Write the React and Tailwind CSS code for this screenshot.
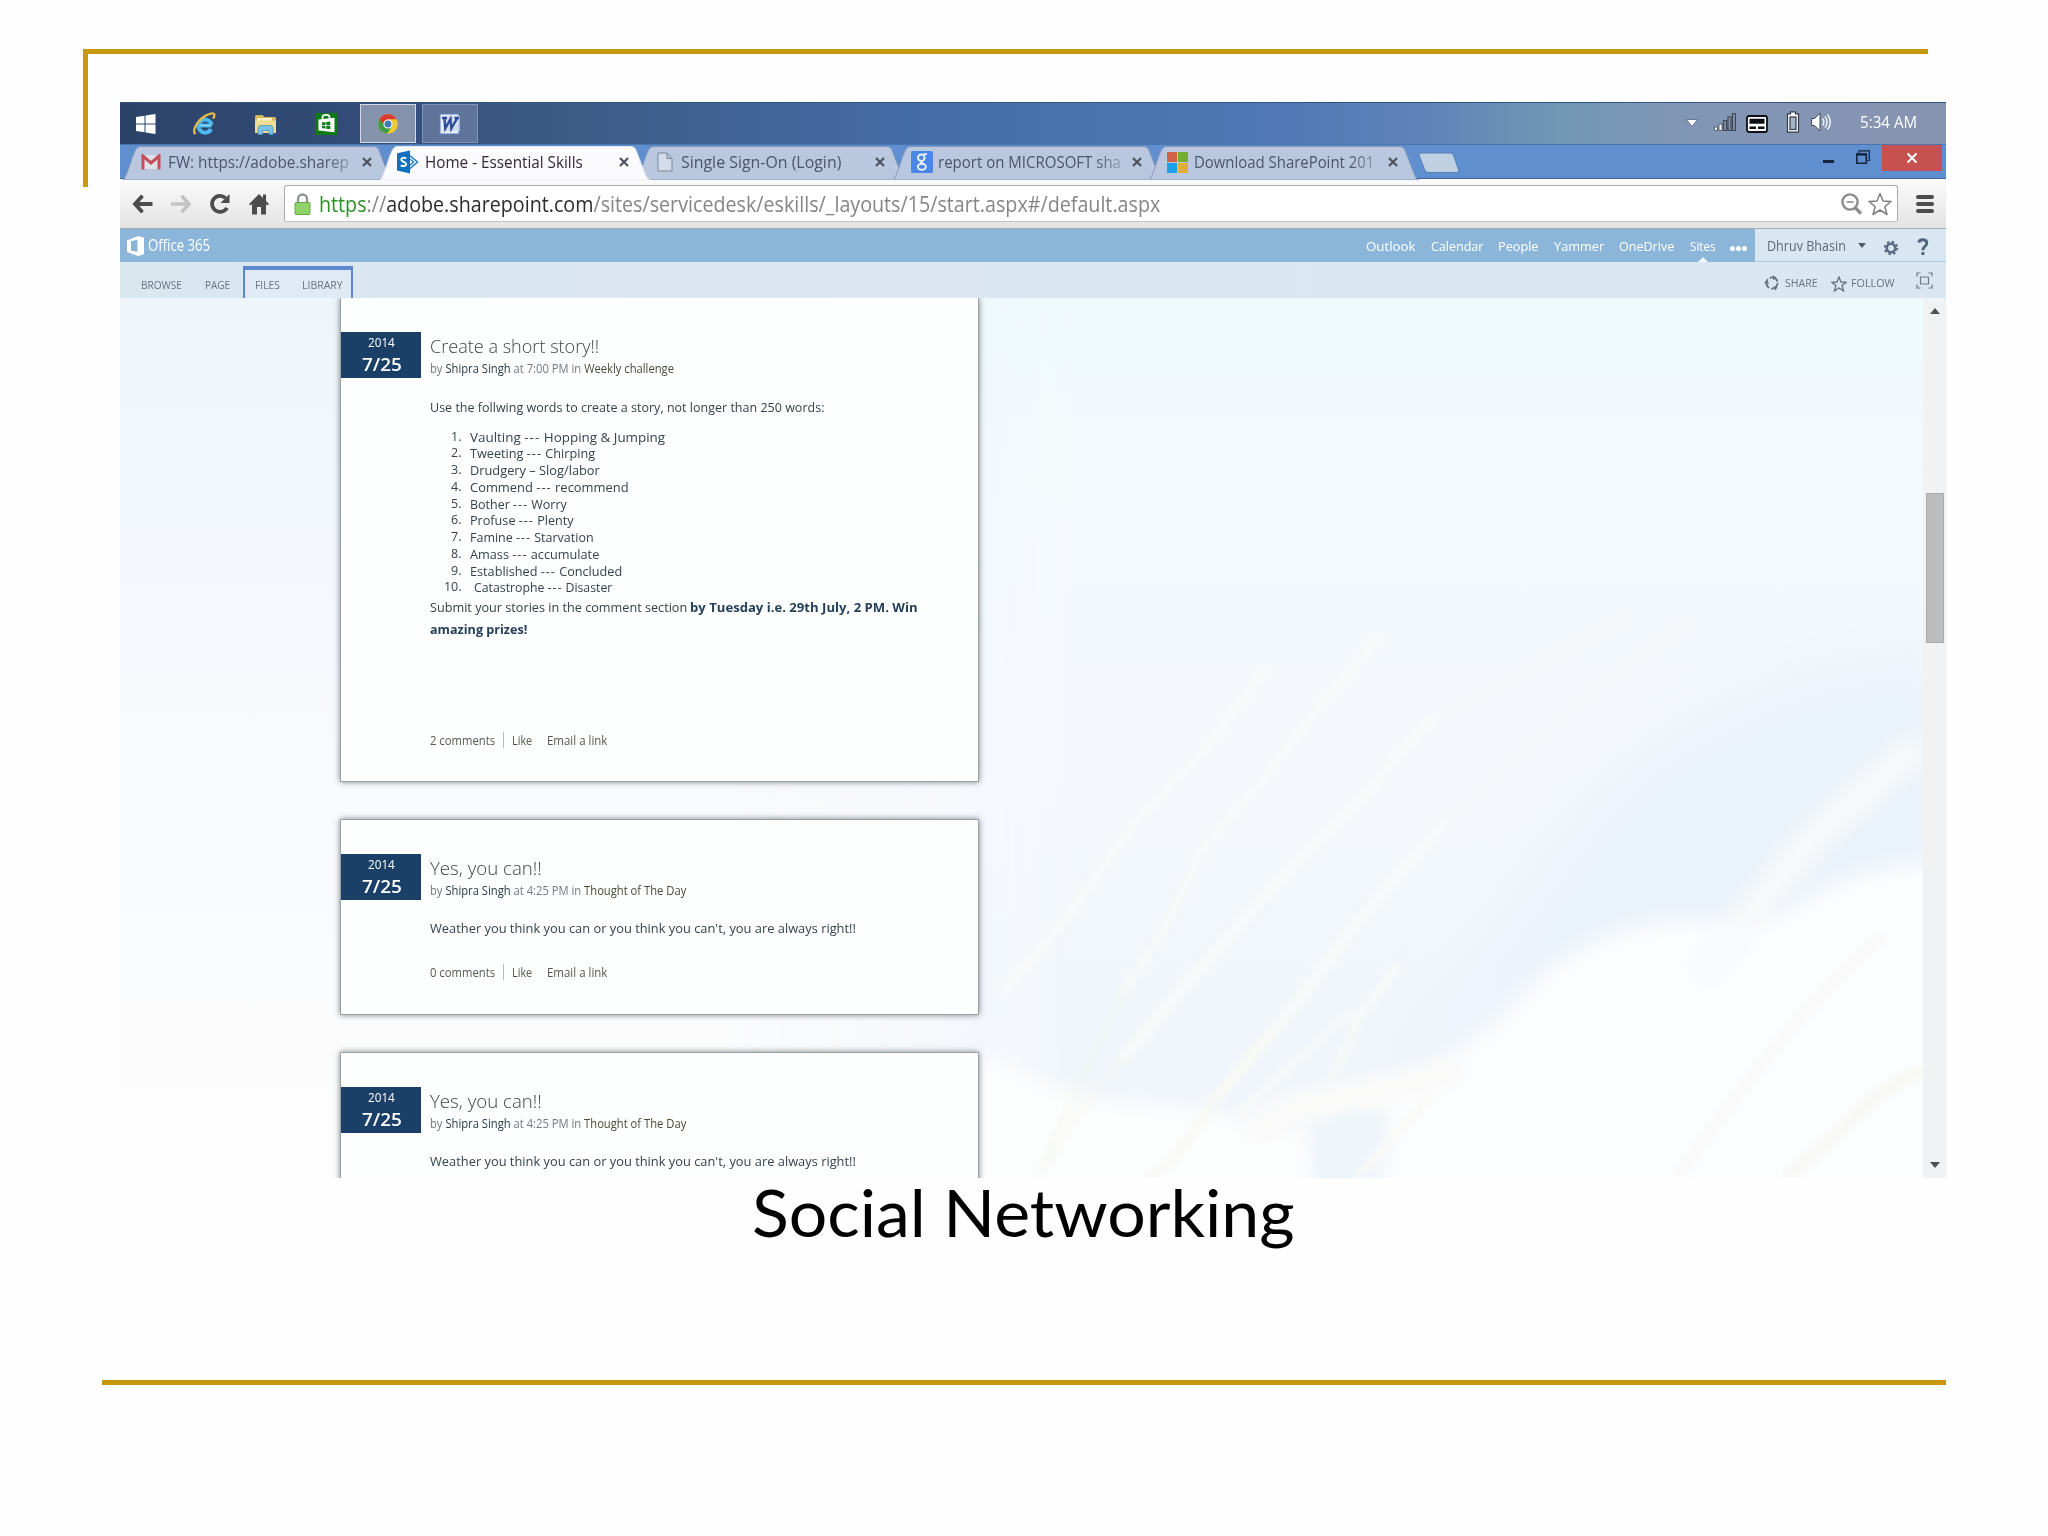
import React, { useLayoutEffect, useRef, useState } from 'react';

// Squeezes or stretches a line of text to the given width
const Fit = ({ w, className = '', children }) => {
  const ref = useRef(null);
  const [scale, setScale] = useState(1);

  useLayoutEffect(() => {
    setScale(w / ref.current.offsetWidth);
  }, [w]);

  return (
    <span className={`inline-block shrink-0 whitespace-nowrap ${className}`} style={{ width: w }}>
      <span ref={ref} className="inline-block origin-left" style={{ transform: `scaleX(${scale})` }}>
        {children}
      </span>
    </span>
  );
};

const WindowsIcon = () => (
  <svg viewBox="0 0 20 20" className="w-5 h-5 shrink-0" fill="#fff">
    <path d="M0 3l8.500-1.200v7.700H0zM9.500 1.600L19.500 0v9.500h-10zM0 10.500h8.500v7.700L0 17zM9.500 10.500h10V20l-10-1.600z" />
  </svg>
);

const ExplorerIcon = () => (
  <svg viewBox="0 0 24 24" className="w-6 h-6 shrink-0" fill="none">
    <path d="M19.500 13.500H7.200M19 17A6.600 6.600 0 1 1 19.600 13" stroke="#4cb8ee" strokeWidth="4" />
    <path d="M7.600 13.400h12" stroke="#9fe0fb" strokeWidth="1" />
    <path d="M3.500 22.200C-.5 19 5 9 13 4c4-2.400 8.500-3.600 9.300-1.800.4 1-.2 2.800-1.200 4.600" stroke="#e5bb45" strokeWidth="2.300" />
  </svg>
);

const FolderIcon = () => (
  <svg viewBox="0 0 24 24" className="w-6 h-6 shrink-0">
    <path d="M2 4.500a1.500 1.500 0 0 1 1.500-1.500h6l2 2h10A1.500 1.500 0 0 1 23 6.500V21H2z" fill="#d9b95f" />
    <path d="M4 6h15v4H4z" fill="#f4eec2" />
    <path d="M2 8.500h21V21H2z" fill="#f0dc92" />
    <path d="M5 22.500v-6a3 3 0 0 1 3-3h9a3 3 0 0 1 3 3v6h-4v-4H9.500v4z" fill="#7cc3e6" stroke="#4a94bd" strokeWidth=".8" />
  </svg>
);

const StoreIcon = () => (
  <svg viewBox="0 0 24 24" className="w-6 h-6 shrink-0">
    <path d="M1 1h21v22H1z" fill="#0f7a17" />
    <path d="M3.500 7.500L19.500 5.800v14.500L3.500 18.500z" fill="#fff" />
    <path d="M7.500 7V5c0-2.800 7-3.100 7 0v1.500" fill="none" stroke="#fff" strokeWidth="1.800" />
    <path d="M7 10.400l3.500-.4v3H7zM11.300 9.900l4-.5v3.600h-4zM7 13.700h3.500v2.900L7 16.200zM11.300 13.700h4v3.500l-4-.5z" fill="#0f7a17" />
  </svg>
);

const ChromeIcon = () => (
  <svg viewBox="0 0 20 20" className="w-5 h-5 shrink-0">
    <circle cx="10" cy="10" r="9.800" fill="#f2c832" />
    <path d="M10 10L1.500 5A9.800 9.800 0 0 0 9 19.700L13.500 13z" fill="#3f9d45" />
    <path d="M1.500 5A9.800 9.800 0 0 1 18.600 5.300H10L6 11z" fill="#d93a2c" />
    <circle cx="10" cy="10" r="4.600" fill="#fff" />
    <circle cx="10" cy="10" r="3.500" fill="#3d79b8" />
  </svg>
);

const WordIcon = () => (
  <svg viewBox="0 0 22 22" className="w-[22px] h-[22px] shrink-0">
    <path d="M1 1h19v20H1z" fill="#e8eefa" stroke="#5b7cbf" />
    <path d="M4 3h17v15H4z" fill="#c9d6f0" opacity=".7" />
    <path d="M3 5h5M5.500 5.500l.8 10L11.500 6l.8 9.500L18 5.500M15.500 5H20" fill="none" stroke="#2f4c98" strokeWidth="2.400" />
  </svg>
);

const Taskbar = () => (
  <div className="h-[42px] shrink-0 flex items-center border-t border-[#33527c] pl-[16px] bg-[linear-gradient(90deg,#2c4368_0%,#334d79_14%,#3d5a85_24%,#446ba3_42%,#4674ab_52%,#5079b5_64%,#6085b9_72%,#7198b4_79%,#8096b5_85%,#8794b1_100%)]">
    <WindowsIcon />
    <span className="w-9" />
    <ExplorerIcon />
    <span className="w-[37px]" />
    <FolderIcon />
    <span className="w-[38px]" />
    <StoreIcon />
    <div className="ml-[21px] w-[56px] h-[39px] shrink-0 flex items-center justify-center border border-[#d5dbe4] bg-[#8492ab]">
      <ChromeIcon />
    </div>
    <div className="ml-[6px] w-[56px] h-[39px] shrink-0 flex items-center justify-center border border-[#8294b4] bg-[#5f7499]">
      <WordIcon />
    </div>
    <div className="ml-auto mr-[29.500px] mb-[4px] flex items-center">
      <svg viewBox="0 0 12 8" className="w-3 h-2 mt-[2px] mr-[16px]">
        <path d="M.5.5h11L6 7.500z" fill="#fff" stroke="#4f5f7d" strokeWidth=".8" />
      </svg>
      <svg viewBox="0 0 22 18" className="w-[22px] h-[18px] mr-[10px]">
        <path d="M.5 14h3v3.500h-3zM5 11h3v6.500H5z" fill="#fff" stroke="#3c4658" strokeWidth=".8" />
        <path d="M9.500 7.500h3v10h-3zM14 4h3v13.500h-3zM18.500.5h3v17h-3z" fill="#8a95aa" stroke="#3c4658" strokeWidth="1.200" />
      </svg>
      <svg viewBox="0 0 22 18" className="w-[22px] h-[18px] mt-1 mr-[18px]">
        <rect x="1" y="1" width="20" height="16" rx="2" fill="#fff" stroke="#0c0f14" strokeWidth="1.800" />
        <path d="M3.500 3.800h15v5h-15zM3.500 11.500h6.500v2.500H3.500zM12 11.500h6.500v2.500H12z" fill="#0c0f14" />
      </svg>
      <svg viewBox="0 0 14 22" className="w-[14px] h-[22px] mr-[11px]">
        <path d="M4.500.8h5v2h3v18.400h-11V2.800h3z" fill="#fff" stroke="#303a4b" strokeWidth="1.200" />
        <rect x="4" y="6" width="6" height="12.500" fill="#a8b4c8" stroke="#303a4b" strokeWidth="1.200" />
      </svg>
      <svg viewBox="0 0 20 20" className="w-5 h-5 mr-[29px]">
        <path d="M.6 6.500h3L9 1v18l-5.400-5.500h-3z" fill="#fff" stroke="#3c4658" />
        <path d="M11.500 6.500c1.600 2 1.600 5 0 7M14 4.500c2.700 3.200 2.700 7.800 0 11M16.500 2.500c3.700 4.500 3.700 10.500 0 15" fill="none" stroke="#eef2f8" strokeWidth="1.500" />
      </svg>
      <Fit w={57} className="text-[17px] leading-6 text-white">5:34 AM</Fit>
    </div>
  </div>
);

const GmailIcon = () => (
  <svg viewBox="0 0 20 16" className="w-5 h-4">
    <path d="M1 1h18v14H1z" fill="#dfe0ea" />
    <path d="M2 15.500V2l8 7 8-7v13.500" fill="none" stroke="#c1505a" strokeWidth="3" />
  </svg>
);

const SharePointIcon = () => (
  <svg viewBox="0 0 22 24" className="w-[22px] h-6 -ml-px">
    <path d="M12 5l8.500 7-8.500 7.500" fill="none" stroke="#2b7fc4" strokeWidth="1.600" />
    <path d="M13 9l3.500 3-3.500 3.500" fill="none" stroke="#2b7fc4" strokeWidth="1.400" />
    <path d="M0 3.200L13 .5v23L0 20.600z" fill="#1170bf" />
    <path d="M9.300 8.300C6.500 6.900 4 8 4.300 9.900c.3 2.200 4.900 1.900 4.900 4.200 0 2-2.900 2.700-5.400 1.300" fill="none" stroke="#fff" strokeWidth="1.900" />
  </svg>
);

const PageIcon = () => (
  <svg viewBox="0 0 16 20" className="w-4 h-5 ml-[3px]">
    <path d="M1 1h9l5 5.500V19H1zM10 1v5.500h5" fill="#d3dcea" stroke="#7d8998" />
  </svg>
);

const GoogleIcon = () => (
  <svg viewBox="0 0 22 22" className="w-[22px] h-[22px]" fill="none" stroke="#e9f0fc">
    <rect width="22" height="22" rx="1.500" fill="#4a86e8" stroke="none" />
    <circle cx="10.300" cy="6.800" r="3.300" strokeWidth="2" />
    <path d="M12.500 3.200h3.500M10.500 10c-1.800 1.500 1 2 2 3" strokeWidth="1.800" />
    <ellipse cx="10.800" cy="15.800" rx="4" ry="3" strokeWidth="2" />
  </svg>
);

const MicrosoftIcon = () => (
  <span className="w-[21px] h-[21px] grid grid-cols-2 gap-px">
    <span className="bg-[#d2614a]" />
    <span className="bg-[#78ac30]" />
    <span className="bg-[#1ba0e8]" />
    <span className="bg-[#dfae35]" />
  </span>
);

const tabs = [
  { title: 'FW: https://adobe.sharep', width: 181, icon: <GmailIcon />, faded: true },
  { title: 'Home - Essential Skills', width: 157.5, icon: <SharePointIcon />, active: true },
  { title: 'Single Sign-On (Login)', width: 160, icon: <PageIcon /> },
  { title: 'report on MICROSOFT sha', width: 183, icon: <GoogleIcon />, faded: true },
  { title: 'Download SharePoint 201', width: 180, icon: <MicrosoftIcon />, faded: true },
];

const Tab = ({ tab }) => (
  <div className={`relative w-[256.5px] h-[35px] shrink-0 ${tab.active ? 'z-10' : ''}`}>
    <svg viewBox="0 0 270 35" className="absolute left-0 top-0 w-[270px] h-[35px]">
      <path
        d="M0 35C4 33 10 6 14 3Q15 1.500 18 1.500H251Q254 1.500 255.500 4L266 31Q267 34 270 35z"
        fill={tab.active ? '#fbfbfd' : '#b9c7df'}
        stroke={tab.active ? '#e2e6ee' : '#8296bb'}
        strokeWidth="1"
      />
    </svg>
    <div className="relative h-[34px] flex items-center">
      <span className="ml-[18px] w-[27px] shrink-0">{tab.icon}</span>
      <span className={`w-[186px] ${tab.faded ? '[mask-image:linear-gradient(90deg,#000_84%,rgba(0,0,0,0.35)_98%)]' : ''}`}>
        <Fit w={tab.width} className={`text-[16px] leading-6 ${tab.active ? 'text-[#33283a]' : 'text-[#4a556b]'}`}>
          {tab.title}
        </Fit>
      </span>
      <svg viewBox="0 0 10 10" className="w-[10px] h-[10px] ml-[8px] shrink-0">
        <path d="M1 1l8 8M9 1L1 9" stroke="#4c5260" strokeWidth="2.200" />
      </svg>
    </div>
  </div>
);

const TabStrip = () => (
  <div className="h-[35px] shrink-0 flex border-t border-[#4a75ae] bg-[#5f8fce] pl-[3px] shadow-[inset_0_-1px_0_#41659b]">
    {tabs.map((tab) => (
      <Tab key={tab.title} tab={tab} />
    ))}
    <svg viewBox="0 0 42 22" className="w-[42px] h-[22px] mt-[7px] ml-[12px]">
      <path d="M1 3q-.5-2 2-2h29q2.500 0 3.500 2l5 15q.5 2.500-2 2.500H11q-3 0-4-2z" fill="#bed0e2" stroke="#5580b8" />
    </svg>
    <div className="ml-auto flex items-start">
      <span className="w-[11px] h-[3px] mt-[15px] bg-[#14243f]" />
      <svg viewBox="0 0 14 14" className="w-[14px] h-[14px] mt-[5px] ml-[22px]" fill="none" stroke="#14243f">
        <path d="M.8 4h9.500v9.200H.8z" strokeWidth="1.600" />
        <path d="M.5 4.600h10" strokeWidth="2" />
        <path d="M3 3V.8h10.300v9.700h-2" strokeWidth="1.200" />
      </svg>
      <span className="w-[60px] h-[26px] ml-[12px] mr-[4px] bg-[#c75050] flex items-center justify-center">
        <svg viewBox="0 0 12 12" className="w-3 h-3">
          <path d="M1.500 1.500l9 9M10.500 1.500l-9 9" stroke="#fff" strokeWidth="2" />
        </svg>
      </span>
    </div>
  </div>
);

const Toolbar = () => (
  <div className="h-[50px] shrink-0 flex items-center border-b border-[#a3adb6] bg-linear-to-b from-[#fbfbfc] to-[#e3e3e4] pl-[12px]">
    <svg viewBox="0 0 22 20" className="w-[22px] h-5" fill="none" stroke="#4c4c4c" strokeWidth="3.800">
      <path d="M2.500 10h18M10.500 1.800L3 10l7.500 8.200" />
    </svg>
    <svg viewBox="0 0 22 20" className="w-[22px] h-5 ml-[16px]" fill="none" stroke="#c3c3c4" strokeWidth="3.500">
      <path d="M1 10h18M11.500 1.800L19 10l-7.500 8.200" />
    </svg>
    <svg viewBox="0 0 22 22" className="w-[22px] h-[22px] ml-[17px]">
      <path d="M18 14.800A8 8 0 1 1 16.500 5" fill="none" stroke="#4c4c4c" strokeWidth="3.700" />
      <path d="M20.500 1v9h-9z" fill="#4c4c4c" />
    </svg>
    <svg viewBox="0 0 20 22" className="w-5 h-[22px] ml-[18px]" fill="#4c4c4c">
      <path d="M10 1l4 4V1.500h3V8l3 3-1.400 1.500L17 11v10.500h-5V14H8v7.500H3V11l-1.600 1.500L0 11z" />
    </svg>
    <div className="ml-[15px] w-[1614px] h-[37px] flex items-center rounded-[3px] border border-[#a9aaad] border-b-[#c4c5c8] bg-white pl-[9px] pr-[5px]">
      <svg viewBox="0 0 17 22" className="w-[17px] h-[22px]">
        <path d="M4 11V6a4.500 4.500 0 0 1 9 0v5" fill="none" stroke="#8f9390" strokeWidth="2.300" />
        <rect x="1" y="9.500" width="15" height="12" rx="1" fill="#8fd26a" stroke="#63a946" />
      </svg>
      <Fit w={841} className="ml-[8px] text-[21px] leading-8 text-[#858585]">
        <span className="text-[#2c9124]">https</span>://<span className="text-[#2b2b30]">adobe.sharepoint.com</span>
        /sites/servicedesk/eskills/_layouts/15/start.aspx#/default.aspx
      </Fit>
      <svg viewBox="0 0 21 22" className="w-[21px] h-[22px] ml-auto" fill="none" stroke="#8b8b8b">
        <circle cx="9" cy="9" r="7.600" strokeWidth="2.400" />
        <path d="M5.500 9h7" strokeWidth="1.600" />
        <path d="M14.500 15l5.500 5.500" strokeWidth="3.200" />
      </svg>
      <svg viewBox="0 0 24 24" className="w-6 h-6 ml-[6px]">
        <path d="M12 1.500l3 7.500 8 .5-6.200 5.200L19 22.500 12 18l-7 4.500 2.200-7.800L1 9.500 9 9z" fill="#fff" stroke="#808080" strokeWidth="1.500" strokeLinejoin="round" />
      </svg>
    </div>
    <div className="ml-[18px] flex flex-col gap-[3px]">
      <span className="w-[18px] h-[4px] rounded-full bg-[#4c4c4c]" />
      <span className="w-[18px] h-[4px] rounded-full bg-[#4c4c4c]" />
      <span className="w-[18px] h-[4px] rounded-full bg-[#4c4c4c]" />
    </div>
  </div>
);

const suiteLinks = [
  { label: 'Outlook', width: 49 },
  { label: 'Calendar', width: 52 },
  { label: 'People', width: 40 },
  { label: 'Yammer', width: 50 },
  { label: 'OneDrive', width: 55 },
];

const SuiteBar = () => (
  <div className="h-[33px] shrink-0 flex items-center bg-[#8cb6d9] text-white">
    <svg viewBox="0 0 17 20" className="w-[17px] h-5 ml-[7px] shrink-0">
      <path d="M0 4.500L11 0l6 1.800v16.400L11 20 0 16zM4 14.800l6.500 1V3.600L4 5.300z" fill="#fff" fillRule="evenodd" />
    </svg>
    <Fit w={62} className="ml-[4px] -mt-[2px] text-[15.500px] leading-6 font-medium">Office 365</Fit>
    <div className="ml-auto flex items-center h-full text-[13px] leading-5 font-medium">
      <div className="flex gap-[15.5px] mr-[16px]">
        {suiteLinks.map((link) => (
          <Fit key={link.label} w={link.width}>{link.label}</Fit>
        ))}
      </div>
      <div className="relative h-full flex items-center">
        <Fit w={26}>Sites</Fit>
        <span className="absolute bottom-0 left-[8px] border-x-[5px] border-b-[5px] border-x-transparent border-b-[#eef5fb]" />
      </div>
      <div className="flex gap-px ml-[14px] mr-[8px] mt-[5px]">
        <span className="w-[5px] h-[5px] rounded-full bg-white" />
        <span className="w-[5px] h-[5px] rounded-full bg-white" />
        <span className="w-[5px] h-[5px] rounded-full bg-white" />
      </div>
      <div className="w-[191px] h-full flex items-center bg-[#d9e7f3] border-b border-[#a9c8e2] pl-[12px] font-normal text-[#5d6877]">
        <Fit w={79} className="mt-px text-[14px]">Dhruv Bhasin</Fit>
        <span className="ml-[12px] border-x-[4px] border-t-[5px] border-x-transparent border-t-[#4f5a68]" />
        <svg viewBox="0 0 16 16" className="w-4 h-4 ml-[17px] mt-[5px]" fill="none" stroke="#5b6b80">
          <circle cx="8" cy="8" r="4.200" strokeWidth="2.600" />
          <circle cx="8" cy="8" r="6.200" strokeWidth="2" strokeDasharray="2.430 2.430" />
        </svg>
        <svg viewBox="0 0 12 18" className="w-3 h-[18px] ml-[18px] mt-[3px]" fill="none" stroke="#52637c" strokeWidth="2.900">
          <path d="M1.800 4.500C2.500.8 9.800.8 9.800 5.200c0 3-3.900 3.300-3.900 7M5.900 14v3" />
        </svg>
      </div>
    </div>
  </div>
);

const Ribbon = () => (
  <div className="h-[36px] shrink-0 flex bg-[linear-gradient(90deg,#d9e7ef,#dbe6f2_30%,#dae7f1)] text-[11.500px] leading-[18px] text-[#67737f]">
    <div className="flex gap-[23px] pl-[21px] pt-[14px]">
      <Fit w={41}>BROWSE</Fit>
      <Fit w={25}>PAGE</Fit>
    </div>
    <div className="ml-[13px] mt-[4px] w-[110px] flex gap-[22px] border-x-2 border-t-[4px] border-[#5b88cf] bg-[#dfeaf5] pl-[10px] pt-[6px]">
      <Fit w={25}>FILES</Fit>
      <Fit w={41}>LIBRARY</Fit>
    </div>
    <div className="ml-auto flex items-center pr-[13px] pt-[6px]">
      <svg viewBox="0 0 16 16" className="w-4 h-4 mr-[5px]" fill="none" stroke="#66727f">
        <circle cx="8" cy="8" r="5.600" strokeWidth="1.800" strokeDasharray="9.500 2.200" />
        <path d="M0 8.500l2.500-3 3 3zM9 0l3.500 2.800L9 5.200zM9.500 11.500l4 .5-2 3.800z" fill="#66727f" stroke="none" />
      </svg>
      <Fit w={33} className="mr-[13px]">SHARE</Fit>
      <svg viewBox="0 0 16 16" className="w-4 h-4 mr-[4px] mt-px" fill="none" stroke="#66727f" strokeWidth="1.300">
        <path d="M8 1l2 5 5.300.3-4.200 3.300L12.600 15 8 12l-4.600 3 1.500-5.400L.7 6.300 6 6z" />
      </svg>
      <Fit w={43} className="mr-[22px]">FOLLOW</Fit>
      <svg viewBox="0 0 17 17" className="w-[17px] h-[17px] -mt-[6px]" fill="none" stroke="#6d7986" strokeWidth="1.200">
        <path d="M1 4.500V1h3.500M12.500 1H16v3.500M16 12.500V16h-3.500M4.500 16H1v-3.500M4.500 5h8v7h-8z" />
      </svg>
    </div>
  </div>
);

const words = [
  { text: 'Vaulting --- Hopping & Jumping', width: 195 },
  { text: 'Tweeting --- Chirping', width: 125 },
  { text: 'Drudgery – Slog/labor', width: 130 },
  { text: 'Commend --- recommend', width: 159 },
  { text: 'Bother --- Worry', width: 97 },
  { text: 'Profuse --- Plenty', width: 104 },
  { text: 'Famine --- Starvation', width: 124 },
  { text: 'Amass --- accumulate', width: 129 },
  { text: 'Established --- Concluded', width: 152 },
  { text: 'Catastrophe --- Disaster', width: 138 },
];

// The dashes between a word and its meaning are set a little wider
const WordPair = ({ text }) => {
  const [word, meaning] = text.split('---');
  if (!meaning) return text;

  return (
    <>
      {word}
      <span className="tracking-[1px]">---</span>
      {meaning}
    </>
  );
};

const PostLinks = ({ comments, className }) => (
  <div className={`flex items-center h-[18px] leading-[18px] text-[#525b4b] ${className}`}>
    <Fit w={65}>{comments} comments</Fit>
    <span className="ml-[8px] mr-[8px] h-4 w-px bg-[#b5bcbf]" />
    <Fit w={20}>Like</Fit>
    <Fit w={60} className="ml-[15px]">Email a link</Fit>
  </div>
);

const Post = ({ title, titleWidth, time, category, metaWidth, className, children }) => (
  <article className={`w-[639px] shrink-0 flex items-start bg-[#fdfefe] border border-[#98a1a3] shadow-[0_0_6px_rgba(70,80,85,0.7)] ${className}`}>
    <div className="w-[80px] h-[46px] shrink-0 bg-[#1b4068] text-white text-center flex flex-col items-center">
      <Fit w={27} className="h-[20px] text-[13px] leading-[20px] font-medium">2014</Fit>
      <Fit w={40} className="text-[18.500px] leading-[23px] font-semibold">7/25</Fit>
    </div>
    <div className="ml-[8.500px] flex flex-col items-start text-[13px] text-[#36424d]">
      <Fit w={titleWidth} className="text-[18.500px] leading-[28px] font-light text-[#3f4640]">{title}</Fit>
      <Fit w={metaWidth} className="leading-[16px] text-[#737b7f]">
        by <span className="text-[#2a3b47]">Shipra Singh</span> at {time} in <span className="text-[#454e36]">{category}</span>
      </Fit>
      <div className="mt-[22px] flex flex-col items-start">{children}</div>
    </div>
  </article>
);

const QuotePost = ({ className, children }) => (
  <Post
    title="Yes, you can!!"
    titleWidth={112}
    time="4:25 PM"
    category="Thought of The Day"
    metaWidth={256}
    className={className}
  >
    <Fit w={426} className="leading-[16px]">
      Weather you think you can or you think you can't, you are always right!!
    </Fit>
    {children}
  </Post>
);

// Faded photo of grass in front of clouds behind the page
const Backdrop = () => (
  <svg viewBox="0 0 1804 880" className="absolute left-0 top-0 w-[1804px] h-[880px]" fill="none">
    <defs>
      <linearGradient id="left" x1="0" y1="0" x2="0" y2="1">
        <stop offset="0" stopColor="#eef6fc" />
        <stop offset=".3" stopColor="#f4f8fd" />
        <stop offset=".6" stopColor="#fafbfd" />
        <stop offset="1" stopColor="#fdfdfd" />
      </linearGradient>
      <linearGradient id="right" x1="0" y1="0" x2="0" y2="1">
        <stop offset="0" stopColor="#eefafc" />
        <stop offset=".15" stopColor="#f3f9fc" />
        <stop offset=".5" stopColor="#f4f8fd" />
        <stop offset="1" stopColor="#eff5fb" />
      </linearGradient>
      <linearGradient id="blend" x1="0" y1="0" x2="1" y2="0">
        <stop offset="0" stopColor="#000" />
        <stop offset=".3" stopColor="#fff" />
      </linearGradient>
      <mask id="fade">
        <path d="M600 0h1204v880H600z" fill="url(#blend)" />
      </mask>
      <filter id="soft" x="-20%" y="-20%" width="140%" height="140%">
        <feGaussianBlur stdDeviation="26" />
      </filter>
      <filter id="cloud" x="-20%" y="-20%" width="140%" height="140%">
        <feGaussianBlur stdDeviation="9" />
      </filter>
      <filter id="thin" x="-20%" y="-20%" width="140%" height="140%">
        <feGaussianBlur stdDeviation="3.500" />
      </filter>
    </defs>
    <path d="M0 0h1804v880H0z" fill="url(#left)" />
    <path d="M600 0h1204v880H600z" fill="url(#right)" mask="url(#fade)" />
    <path d="M1260 780C1400 640 1440 500 1560 430S1750 360 1830 350V640L1500 660z" fill="#ebf3fa" filter="url(#soft)" />
    <g filter="url(#cloud)">
      <path d="M840 760C880 750 900 780 960 795S1060 800 1120 820L1190 830 1195 900H840z" fill="#fcfdfd" />
      <path d="M1120 815C1180 790 1240 790 1278 780S1370 735 1400 700 1480 635 1529 627 1640 630 1676 608 1750 565 1830 566V900H1262L1270 815 1190 820z" fill="#fcfdfe" />
    </g>
    <path d="M1195 825C1230 810 1250 810 1266 815L1240 880H1200z" fill="#edf5f9" filter="url(#thin)" />
    <g filter="url(#thin)" stroke="#f7faf9" strokeLinecap="round" strokeLinejoin="round">
      <path d="M886 692L941 627 1015 524 1082 455 1143 375" strokeWidth="11" opacity=".8" />
      <path d="M1002 696L1045 631 1082 551 1137 489 1211 394 1260 340" strokeWidth="10" opacity=".8" />
      <path d="M1002 761L1064 689 1119 627 1174 566 1247 493 1309 424" strokeWidth="12" />
      <path d="M1309 424L1407 371 1511 317" strokeWidth="10" opacity=".5" />
      <path d="M1094 803L1174 708 1241 620 1321 528" strokeWidth="12" />
      <path d="M1321 528L1382 474 1462 402 1572 321" strokeWidth="11" opacity=".5" />
      <path d="M1119 815L1229 715" strokeWidth="7" />
      <path d="M1211 780L1241 715 1278 669" strokeWidth="8" />
    </g>
    <path d="M1580 680L1615 635 1694 539 1799 447" stroke="#f7f9fa" strokeWidth="30" filter="url(#cloud)" />
    <g filter="url(#thin)" strokeLinecap="round" strokeLinejoin="round">
      <path d="M920 876C940 820 975 760 1002 696" stroke="#f3f5ef" strokeWidth="3" />
      <path d="M930 865C955 815 980 790 1002 761" stroke="#f5f6f1" strokeWidth="3" />
      <path d="M1030 880C1060 860 1075 830 1094 803L1150 735" stroke="#f7f8f3" strokeWidth="7" />
      <path d="M1240 876L1310 800" stroke="#f9faf6" strokeWidth="8" />
      <path d="M1560 876C1620 790 1690 700 1760 640" stroke="#f9f9f9" strokeWidth="12" />
      <path d="M1670 876C1720 840 1750 790 1800 775" stroke="#f7f7f3" strokeWidth="12" />
    </g>
    <path d="M1130 835C1180 800 1260 795 1340 770" stroke="#faf9f8" strokeWidth="24" filter="url(#cloud)" />
  </svg>
);

const Scrollbar = () => (
  <div className="relative w-[23px] shrink-0 flex flex-col items-center bg-[#f1f2f3] pt-[10px] pb-[10px]">
    <span className="border-x-[5px] border-b-[6px] border-x-transparent border-b-[#505050]" />
    <span className="mt-[179px] w-[18px] h-[150px] bg-[#bbbcbe] border border-[#a9aaac]" />
    <span className="mt-auto border-x-[5px] border-t-[6px] border-x-transparent border-t-[#505050]" />
  </div>
);

const Feed = () => (
  <div className="h-[880px] shrink-0 flex overflow-hidden">
    <div className="relative flex-1 overflow-hidden">
      <Backdrop />
      <div className="relative ml-[220px] flex flex-col">
        <Post
          title="Create a short story!!"
          titleWidth={169}
          time="7:00 PM"
          category="Weekly challenge"
          metaWidth={244}
          className="h-[484px] border-t-0 pt-[34px]"
        >
          <Fit w={394} className="mt-px leading-[17px]">
            Use the follwing words to create a story, not longer than 250 words:
          </Fit>
          <ol className="mt-[12.500px]">
            {words.map((word, i) => (
              <li key={word.text} className="flex h-[16.750px] leading-[16.750px]">
                <span className="w-[32px] text-right text-[12.500px]">{i + 1}.</span>
                <Fit w={word.width} className={i === 9 ? 'ml-[12px]' : 'ml-[8px]'}>
                  <WordPair text={word.text} />
                </Fit>
              </li>
            ))}
          </ol>
          <div className="-mt-[.5px] flex leading-[22.500px]">
            <Fit w={257}>Submit your stories in the comment section</Fit>
            <Fit w={228} className="ml-[3.500px] font-bold text-[#27405a]">by Tuesday i.e. 29th July, 2 PM. Win</Fit>
          </div>
          <Fit w={97} className="leading-[22.500px] font-bold text-[#27405a]">amazing prizes!</Fit>
          <PostLinks comments={2} className="mt-[90px]" />
        </Post>
        <QuotePost className="mt-[37px] h-[196px] pt-[34px]">
          <PostLinks comments={0} className="mt-[27px]" />
        </QuotePost>
        <QuotePost className="mt-[37px] h-[195px] pt-[34px]" />
      </div>
    </div>
    <Scrollbar />
  </div>
);

const App = () => (
  <div className="w-[2048px] h-[1536px] overflow-hidden bg-[#fefefe] font-['Open_Sans','Noto_Sans',sans-serif]">
    <div className="relative h-full pt-[102px]">
      <div className="absolute left-[83px] top-[49px] w-[1845px] h-[138px] border-t-[5px] border-l-[5px] border-[#c6980f] [clip-path:polygon(0_0,100%_0,100%_5px,5px_5px,5px_100%,0_100%)]" />
      <div className="relative ml-[120px] w-[1826px] h-[1076px] flex flex-col overflow-hidden">
        <Taskbar />
        <TabStrip />
        <Toolbar />
        <SuiteBar />
        <Ribbon />
        <Feed />
      </div>
      <h1 className="-mt-[6px] ml-[752px] font-['Lato',sans-serif] text-[65px] leading-[80px] text-black">
        <Fit w={543}>Social Networking</Fit>
      </h1>
      <div className="mt-[128px] ml-[102px] w-[1844px] h-[5px] bg-[#c6980f]" />
    </div>
  </div>
);

export default App;
